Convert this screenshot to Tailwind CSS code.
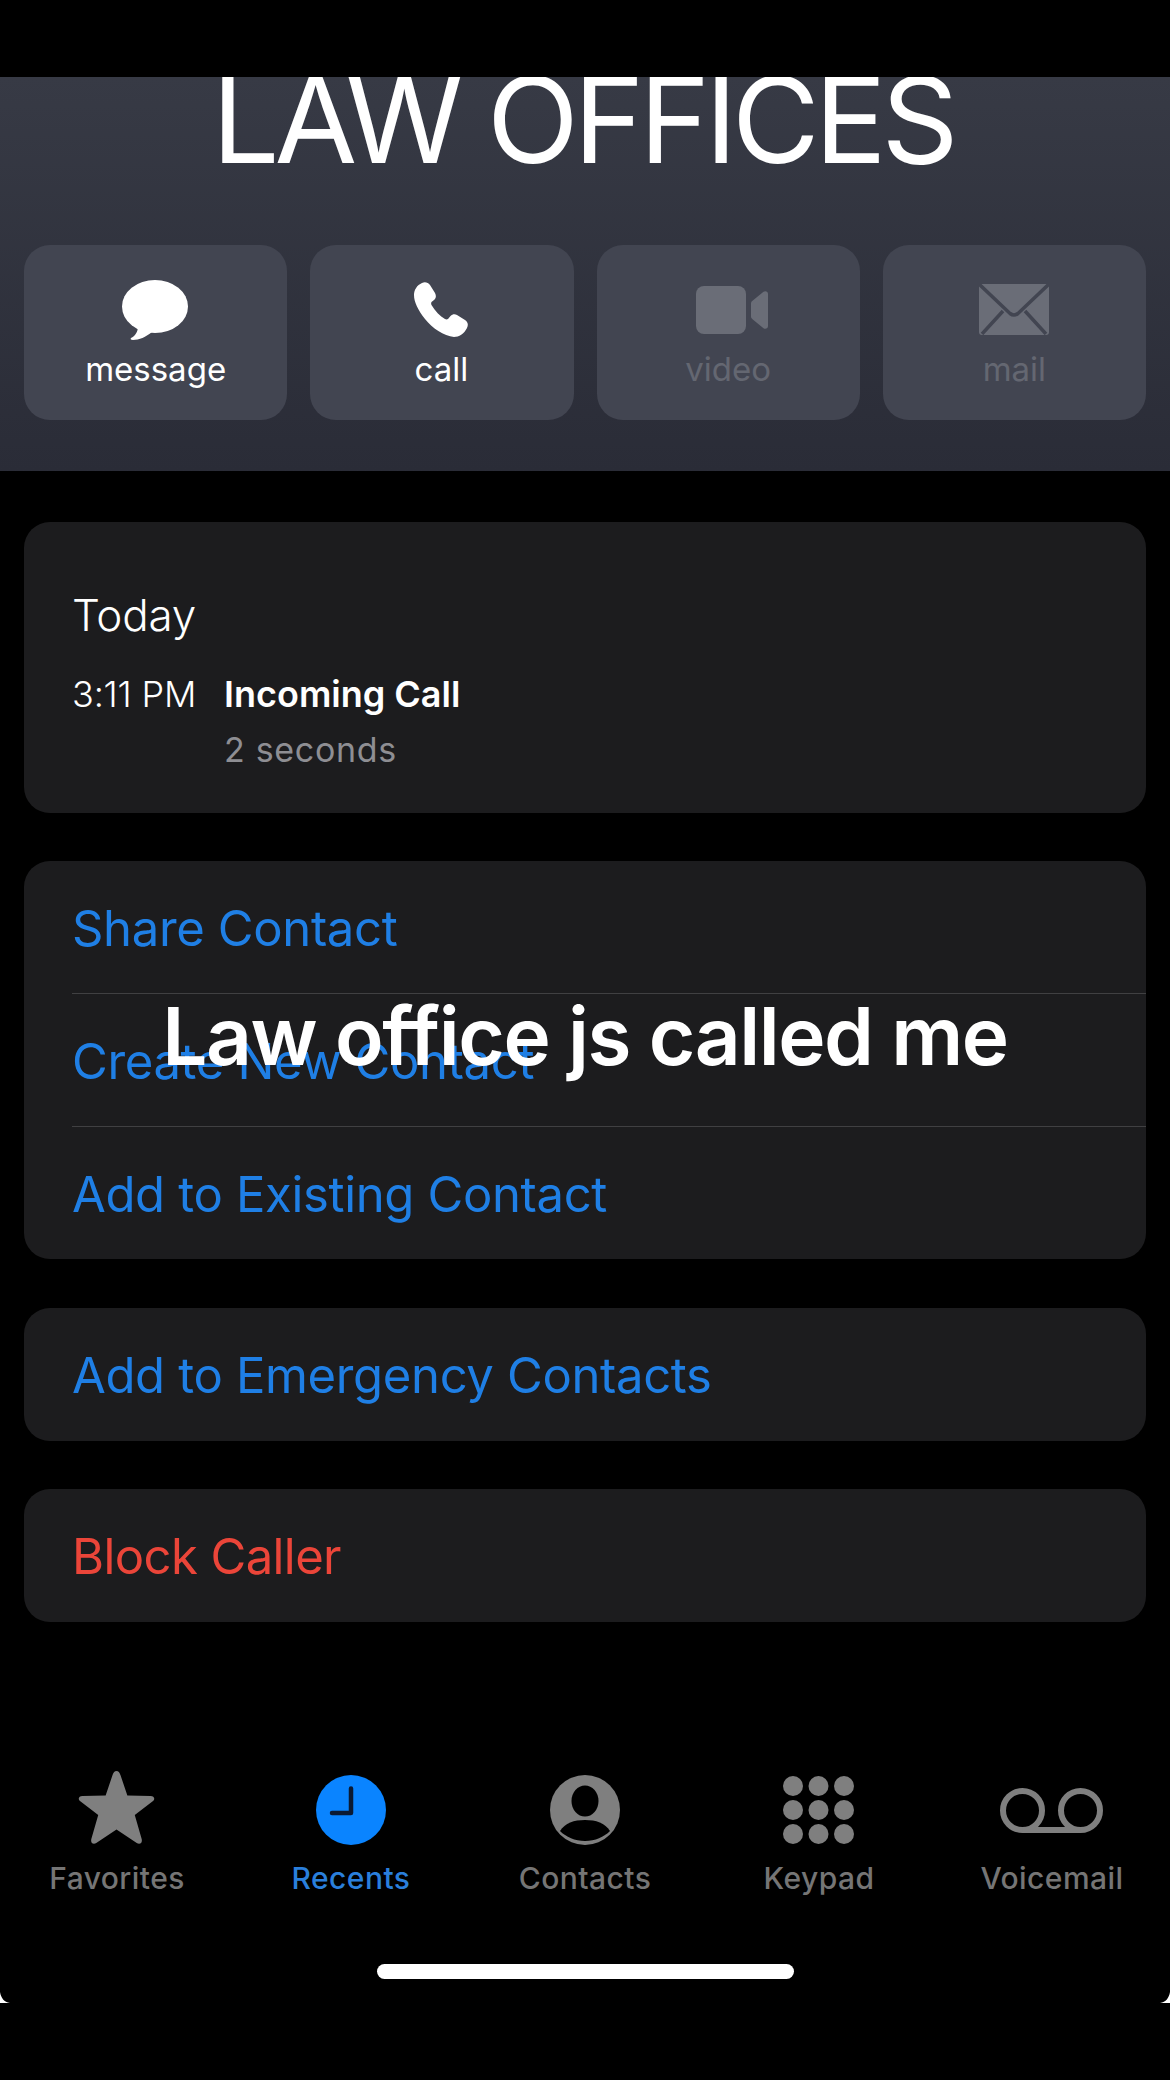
<!DOCTYPE html>
<html lang="en">
<head>
<meta charset="utf-8">
<script src="https://cdn.jsdelivr.net/npm/@tailwindcss/browser@4"></script>
<title>Law Offices</title>
</head>
<body class="bg-black">
<div class="relative w-[1170px] h-[2080px] overflow-hidden bg-black text-white font-['Inter',sans-serif]">
  <div class="h-[77px]"></div>

  <header class="h-[394px] overflow-hidden bg-gradient-to-b from-[#373a45] to-[#2a2c37]">
    <div class="h-[168px] flex justify-center">
      <h1 class="-mt-[17px] -ml-[5px] text-center text-[120px] leading-none font-normal tracking-[-0.043em]">LAW OFFICES</h1>
    </div>
    <div class="grid grid-cols-4 gap-[23px] px-[24px]">
      <div class="h-[175px] rounded-[26px] bg-[#424551] flex flex-col items-center">
        <div class="mt-[34px] h-[61px] flex items-center -ml-[1px]">
          <svg width="66" height="60" viewBox="0 0 66 60" fill="#fff"><ellipse cx="33" cy="26.5" rx="33" ry="26.5"/><path d="M16 46 C16 52 13 56 9 58 C8 59 9 60 11 60 C17 60 24 57 30 52Z"/></svg>
        </div>
        <span class="mt-[13px] text-[33px] leading-[33px] text-white">message</span>
      </div>
      <div class="h-[175px] rounded-[26px] bg-[#424551] flex flex-col items-center">
        <div class="mt-[34px] h-[61px] flex items-center -ml-[2px]">
          <svg width="54" height="55" viewBox="0 0 54 55" fill="#fff"><path d="M8 1C11-.5 14 .5 16 3L21 11C22.500 14 22 16 20 18L17.500 20C17 21 17 22 17.500 23C21 29 26 34 31 37C32 37.500 33 37.500 34 37L36.500 34C38.500 32 41 32 43 33L51 38C54 40 54.500 43 53 46C50 52 45 55 40 55C30 54 18 46 11 37C4 28 0 20 0 13C0 8 3 3 8 1Z"/></svg>
        </div>
        <span class="mt-[13px] text-[33px] leading-[33px] text-white -ml-[1px]">call</span>
      </div>
      <div class="h-[175px] rounded-[26px] bg-[#424551] flex flex-col items-center">
        <div class="mt-[34px] h-[61px] flex items-center ml-[7px]">
          <svg width="72" height="48" viewBox="0 0 72 48" fill="#6a6d77"><rect x="0" y="0" width="50" height="48" rx="8"/><path d="M55 17.500C55 16.500 55.500 15.500 56.500 14.800L67.500 5.800C69.500 4.500 72 5.500 72 8V40C72 42.500 69.500 43.500 67.500 42.200L56.500 33.200C55.500 32.500 55 31.500 55 30.500Z"/></svg>
        </div>
        <span class="mt-[13px] text-[33px] leading-[33px] text-[#646771]">video</span>
      </div>
      <div class="h-[175px] rounded-[26px] bg-[#424551] flex flex-col items-center">
        <div class="mt-[34px] h-[61px] flex items-center">
          <svg width="70" height="51" viewBox="0 0 70 51"><rect width="70" height="51" rx="3" fill="#6a6d77"/><path d="M0 0L31 29.500Q35 32.500 39 29.500L70 0M3 50L24 27M67 50L46 27" fill="none" stroke="#424551" stroke-width="3.500"/></svg>
        </div>
        <span class="mt-[13px] text-[33px] leading-[33px] text-[#646771]">mail</span>
      </div>
    </div>
  </header>

  <main class="mt-[51px] mx-[24px] flex flex-col">
    <section class="h-[291px] rounded-[26px] bg-[#1c1c1e] pl-[48px] pt-[71px]">
      <p class="text-[44px] leading-[44px] font-light tracking-[-0.005em]">Today</p>
      <div class="mt-[40px] flex">
        <span class="w-[152px] text-[36px] leading-[34px] font-light tracking-[-0.005em]">3:11 PM</span>
        <div>
          <p class="text-[36px] leading-[34px] font-semibold">Incoming Call</p>
          <p class="mt-[22px] text-[34px] leading-[34px] tracking-[0.02em] text-[#8e8e93]">2 seconds</p>
        </div>
      </div>
    </section>

    <section class="mt-[48px] rounded-[26px] bg-[#1c1c1e] text-[49px] leading-none tracking-[-0.007em] text-[#1f7fe5]">
      <div class="h-[132px] pl-[48px] pt-[2px] flex items-center">Share Contact</div>
      <div class="ml-[48px] h-px bg-[#404042]"></div>
      <div class="h-[132px] pl-[48px] pt-[2px] flex items-center">Create New Contact</div>
      <div class="ml-[48px] h-px bg-[#404042]"></div>
      <div class="h-[132px] pl-[48px] pt-[2px] flex items-center">Add to Existing Contact</div>
    </section>

    <section class="mt-[49px] h-[133px] rounded-[26px] bg-[#1c1c1e] pl-[48px] pt-[2px] flex items-center text-[49px] leading-none tracking-[-0.007em] text-[#1f7fe5]">Add to Emergency Contacts</section>
    <section class="mt-[48px] h-[133px] rounded-[26px] bg-[#1c1c1e] pl-[48px] pt-[2px] flex items-center text-[49px] leading-none tracking-[-0.012em] text-[#eb4539]">Block Caller</section>
  </main>

  <nav class="mt-[149px] grid grid-cols-5">
    <div class="flex flex-col items-center">
      <div class="h-[78px] flex items-center -ml-[1px]">
        <svg class="mb-[5px]" width="77" height="74" viewBox="0 0 78 74" preserveAspectRatio="none" fill="#7f7f7f"><path d="M39 0C41 0 42 1.500 43 4L50 24.500L73.500 25C77 25 78.500 28 76 30L57.500 44L64.500 68C65.500 72 62.500 74 59.500 72L39 58.500L18.500 72C15.500 74 12.500 72 13.500 68L20.500 44L2 30C-.5 28 1 25 4.500 25L28 24.500L35 4C36 1.500 37 0 39 0Z"/></svg>
      </div>
      <span class="mt-[14px] text-[30px] leading-[30px] font-medium tracking-[0.015em] text-[#757575]">Favorites</span>
    </div>
    <div class="flex flex-col items-center">
      <div class="h-[78px] flex items-center">
        <svg width="70" height="70" viewBox="0 0 70 70"><circle cx="35" cy="35" r="35" fill="#0a84ff"/><path d="M35 13.500V38H16" fill="none" stroke="#0b1a33" stroke-width="4.500" stroke-linecap="round" stroke-linejoin="round"/></svg>
      </div>
      <span class="mt-[14px] text-[30px] leading-[30px] font-medium tracking-[0.015em] text-[#2a7fdc]">Recents</span>
    </div>
    <div class="flex flex-col items-center">
      <div class="h-[78px] flex items-center">
        <svg width="70" height="70" viewBox="0 0 70 70"><circle cx="35" cy="35" r="35" fill="#7f7f7f"/><ellipse cx="35" cy="26" rx="13.500" ry="15.500" fill="#000"/><path d="M10 56C15 48 24 45 35 45C46 45 55 48 60 56C54 62 45 66 35 66C25 66 16 62 10 56Z" fill="#000"/></svg>
      </div>
      <span class="mt-[14px] text-[30px] leading-[30px] font-medium tracking-[0.015em] text-[#757575]">Contacts</span>
    </div>
    <div class="flex flex-col items-center">
      <div class="h-[78px] flex items-center -ml-[2px]">
        <svg width="71" height="68" viewBox="0 0 71 68" fill="#7f7f7f">
          <circle cx="10" cy="10" r="10"/><circle cx="35.500" cy="10" r="10"/><circle cx="61" cy="10" r="10"/>
          <circle cx="10" cy="34" r="10"/><circle cx="35.500" cy="34" r="10"/><circle cx="61" cy="34" r="10"/>
          <circle cx="10" cy="58" r="10"/><circle cx="35.500" cy="58" r="10"/><circle cx="61" cy="58" r="10"/>
        </svg>
      </div>
      <span class="mt-[14px] text-[30px] leading-[30px] font-medium tracking-[0.015em] text-[#757575]">Keypad</span>
    </div>
    <div class="flex flex-col items-center">
      <div class="h-[78px] flex items-center -ml-[4px]">
        <svg width="103" height="45" viewBox="0 0 103 45" fill="none" stroke="#7f7f7f" stroke-width="6"><circle cx="22.500" cy="22.500" r="19.500"/><circle cx="80.500" cy="22.500" r="19.500"/><path d="M22.500 42H80.500"/></svg>
      </div>
      <span class="mt-[14px] text-[30px] leading-[30px] font-medium tracking-[0.015em] text-[#757575] -ml-[2px]">Voicemail</span>
    </div>
  </nav>

  <div class="mt-[71px] mx-auto w-[417px] h-[15px] rounded-full bg-white"></div>

  <h2 class="absolute left-0 right-0 top-[996px] text-center text-[80px] leading-none font-semibold tracking-[-0.018em] text-white">Law office js called me</h2>

  <svg class="absolute left-0 top-[1992px]" width="11" height="11" viewBox="0 0 11 11" fill="#fff"><path d="M0 0C1 6 4 10 10 11H0Z"/></svg>
  <svg class="absolute right-0 top-[1992px]" width="11" height="11" viewBox="0 0 11 11" fill="#fff"><path d="M11 0C10 6 7 10 1 11H11Z"/></svg>
</div>
</body>
</html>
